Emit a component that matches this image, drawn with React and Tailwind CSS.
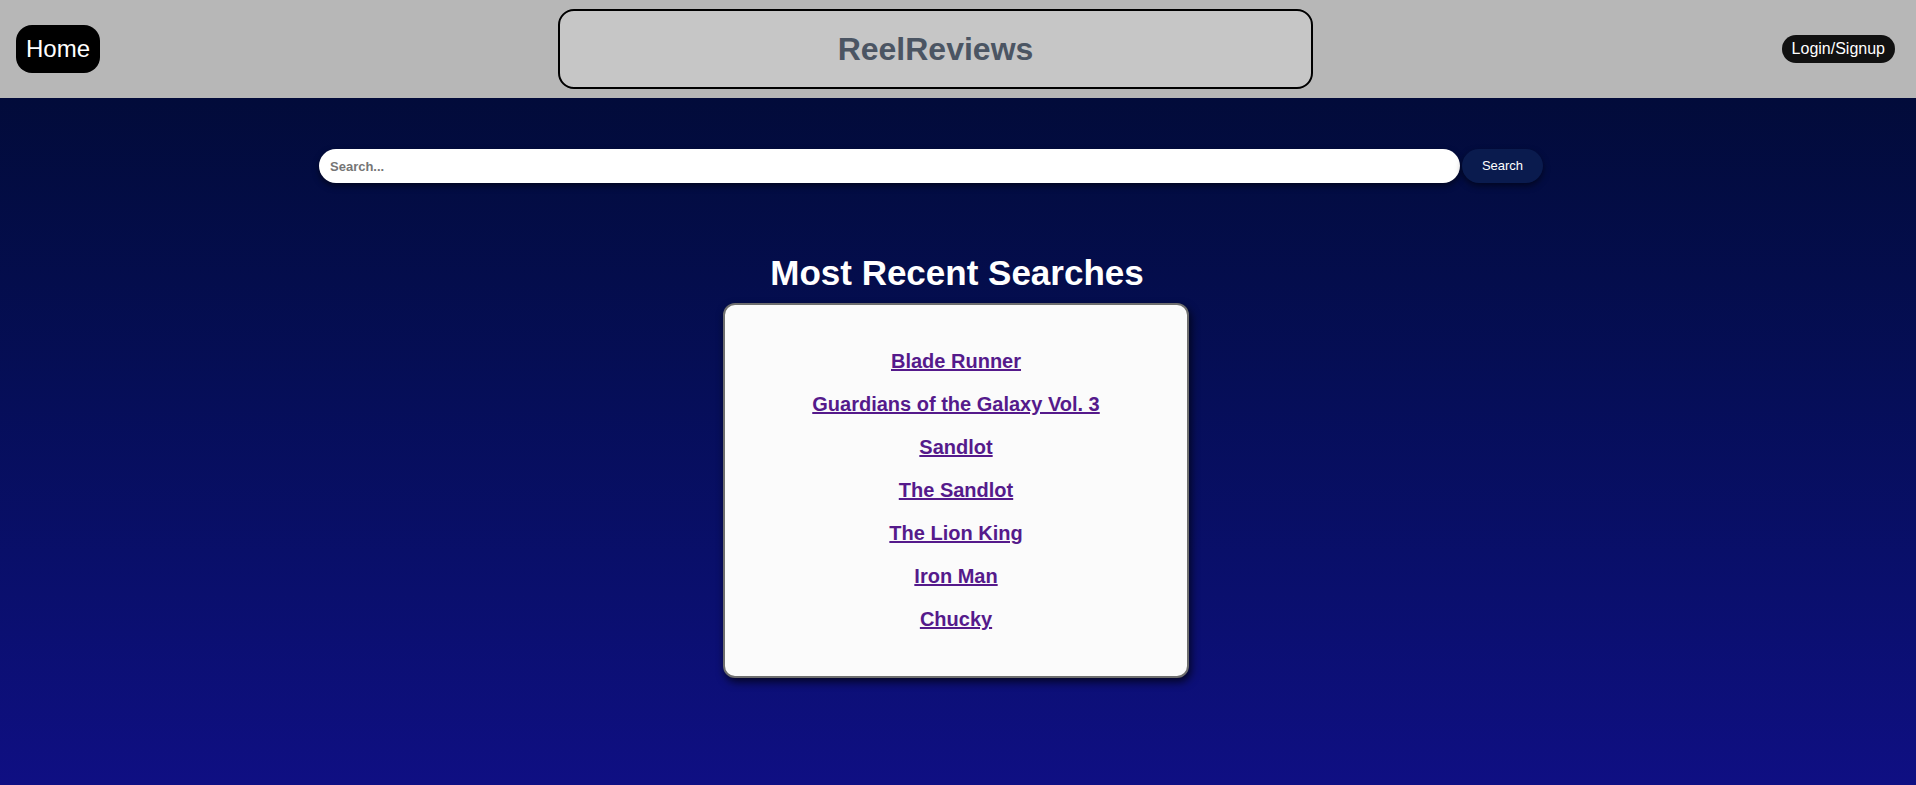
import React from "react";

const movies = [
  "Blade Runner",
  "Guardians of the Galaxy Vol. 3",
  "Sandlot",
  "The Sandlot",
  "The Lion King",
  "Iron Man",
  "Chucky",
];

export default function App() {
  return (
    <div className="h-[785px] overflow-hidden flex flex-col font-['Liberation_Sans',Arial,sans-serif]">
      <header className="h-[98px] shrink-0 bg-[#b7b7b7] flex items-center pl-4 pr-[21px]">
        <a
          href="#"
          className="h-[48px] w-[84px] flex items-center justify-center bg-black text-white text-[24px] leading-[28px] rounded-[16px]"
        >
          Home
        </a>
        <div className="ml-[458px] w-[755px] h-[80px] border-2 border-black rounded-[16px] bg-[#c6c6c6] flex items-center justify-center">
          <h1 className="text-[32px] font-bold text-[#4b5563] leading-none">ReelReviews</h1>
        </div>
        <a
          href="#"
          className="ml-auto h-[28px] px-[10px] flex items-center bg-[#111111] text-white text-[16px] leading-none rounded-full"
        >
          Login/Signup
        </a>
      </header>
      <main className="flex-1 bg-gradient-to-b from-[#020b3a] to-[#0f0f83] flex flex-col">
        <div className="mt-[51px] ml-[319px] flex items-center">
          <input
            type="text"
            placeholder="Search..."
            className="w-[1141px] h-[34px] bg-white rounded-full pl-[11px] text-[13px] font-bold text-[#333] placeholder:text-[#757575] outline-none shadow-[0_3px_6px_rgba(0,0,0,0.5)]"
          />
          <button className="ml-[2px] w-[81px] h-[34px] bg-[#0a1b4e] text-white text-[13px] rounded-full shadow-[0_3px_6px_rgba(0,0,0,0.5)]">
            Search
          </button>
        </div>
        <div className="flex flex-col items-center mt-[70px]">
          <h2 className="ml-[-2px] text-[35px] leading-[40px] font-bold text-white">Most Recent Searches</h2>
          <div className="mt-[10px] ml-[-4px] w-[466px] h-[375px] bg-[#fbfbfb] border-2 border-[#6e6e6e] rounded-[12px] shadow-[2px_4px_8px_rgba(0,0,0,0.7)] flex flex-col items-center pt-[45px] gap-[20px]">
            {movies.map((m) => (
              <a
                key={m}
                href="#"
                className="text-[20px] leading-[23px] font-bold text-[#551a8b] underline"
              >
                {m}
              </a>
            ))}
          </div>
        </div>
      </main>
    </div>
  );
}
